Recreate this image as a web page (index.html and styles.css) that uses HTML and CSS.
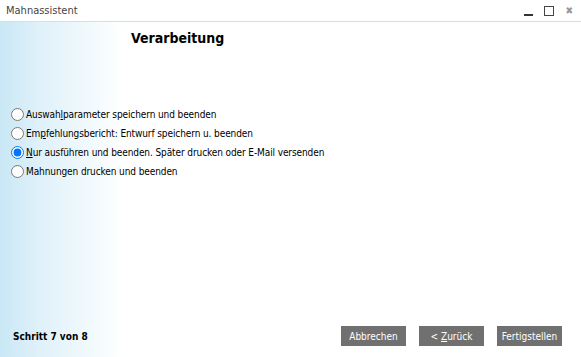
FILE: index.html
```html
<!DOCTYPE html>
<html lang="de">
  <head>
    <meta charset="UTF-8" />
    <title>Mahnassistent</title>
    <link rel="stylesheet" href="styles.css">
  </head>
  <body>
    <div class="window">
      <div class="titlebar">
        <span class="title">Mahnassistent</span>
        <div class="controls">
          <span class="ctl min"></span>
          <span class="ctl max"></span>
          <span class="ctl close">&#10006;</span>
        </div>
      </div>
      <div class="content">
        <h1>Verarbeitung</h1>
        <div class="options">
          <label class="option"><input type="radio" name="mode" /><span>Auswah<u>l</u>parameter speichern und beenden</span></label>
          <label class="option"><input type="radio" name="mode" /><span>Em<u>p</u>fehlungsbericht: Entwurf speichern u. beenden</span></label>
          <label class="option"><input type="radio" name="mode" checked /><span><u>N</u>ur ausführen und beenden. Später drucken oder E-Mail versenden</span></label>
          <label class="option"><input type="radio" name="mode" /><span>Mahnungen drucken und beenden</span></label>
        </div>
        <div class="footer">
          <span class="step">Schritt 7 von 8</span>
          <div class="buttons">
            <button type="button">Abbrechen</button>
            <button type="button">&lt; <u>Z</u>urück</button>
            <button type="button">Fertigstellen</button>
          </div>
        </div>
      </div>
    </div>
  </body>
</html>
```

FILE: styles.css
```css
html, body {
  margin: 0;
  padding: 0;
}
body {
  width: 581px;
  height: 357px;
  overflow: hidden;
  font-family: "DejaVu Sans Condensed", "DejaVu Sans", sans-serif;
  font-size: 10px;
  color: #000;
  background: #fff;
}
.window {
  display: flex;
  flex-direction: column;
  height: 357px;
}
.titlebar {
  height: 21px;
  display: flex;
  align-items: center;
  justify-content: space-between;
  border-bottom: 1px solid #dcdcdc;
  padding: 0 6px;
  background: #fff;
}
.title {
  font-size: 11px;
  color: #444;
}
.controls {
  display: flex;
  align-items: center;
  gap: 11px;
  padding-right: 2px;
}
.ctl {
  display: block;
  color: #555;
}
.min {
  width: 9px;
  height: 2px;
  background: #333;
  margin-top: 8px;
}
.max {
  width: 8px;
  height: 8px;
  border: 1px solid #444;
}
.close {
  font-size: 10px;
  line-height: 10px;
  color: #999;
}
.content {
  flex: 1;
  display: flex;
  flex-direction: column;
  background: linear-gradient(to right, #c9e7f5 0px, #e0f1fa 40px, #eef8fc 80px, #fff 125px);
}
h1 {
  margin: 8px 0 0 131px;
  font-size: 14px;
  font-weight: bold;
  height: 18px;
}
.options {
  display: flex;
  flex-direction: column;
  gap: 6px;
  margin: 60px 0 0 10px;
  letter-spacing: -0.1px;
}
.option {
  display: flex;
  align-items: center;
  height: 13px;
}
.option input {
  margin: 0 2px 0 1px;
  width: 13px;
  height: 13px;
}
.option u {
  text-decoration: underline;
}
.footer {
  margin-top: auto;
  display: flex;
  align-items: center;
  justify-content: space-between;
  padding: 0 19px 11px 13px;
}
.step {
  font-weight: bold;
}
.buttons {
  display: flex;
  gap: 13px;
}
.buttons button {
  width: 65px;
  height: 20px;
  border: 0;
  padding: 0;
  background: #707070;
  color: #fff;
  font-family: inherit;
  font-size: 10px;
}
```
